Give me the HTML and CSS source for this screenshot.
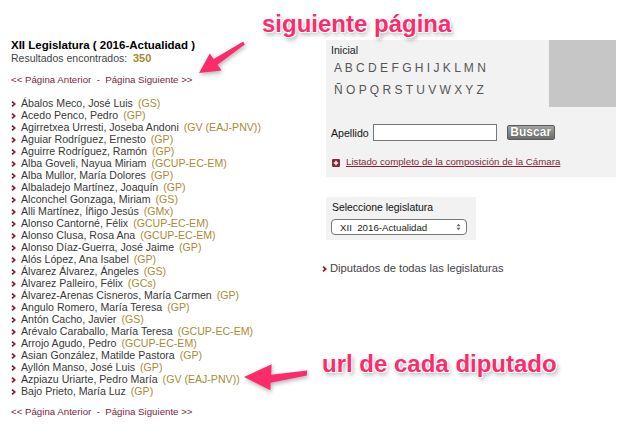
FILE: index.html
```html
<!DOCTYPE html>
<html lang="es">
<head>
<meta charset="utf-8">
<title>Diputados</title>
<link rel="stylesheet" href="styles.css">
</head>
<body>
<div class="page">
  <div class="left">
    <h1 class="title">XII Legislatura ( 2016-Actualidad )</h1>
    <div class="count">Resultados encontrados:&nbsp; <b>350</b></div>
    <div class="pager"><a>&lt;&lt; Página Anterior</a>&nbsp; -&nbsp; <a>Página Siguiente &gt;&gt;</a></div>
    <ul class="list">
      <li><svg class="chev" viewBox="0 0 5 6"><polyline points="1,0.6 3.8,3 1,5.4"/></svg><a>Ábalos Meco, José Luis</a><span class="party">(GS)</span></li>
      <li><svg class="chev" viewBox="0 0 5 6"><polyline points="1,0.6 3.8,3 1,5.4"/></svg><a>Acedo Penco, Pedro</a><span class="party">(GP)</span></li>
      <li><svg class="chev" viewBox="0 0 5 6"><polyline points="1,0.6 3.8,3 1,5.4"/></svg><a>Agirretxea Urresti, Joseba Andoni</a><span class="party">(GV (EAJ-PNV))</span></li>
      <li><svg class="chev" viewBox="0 0 5 6"><polyline points="1,0.6 3.8,3 1,5.4"/></svg><a>Aguiar Rodríguez, Ernesto</a><span class="party">(GP)</span></li>
      <li><svg class="chev" viewBox="0 0 5 6"><polyline points="1,0.6 3.8,3 1,5.4"/></svg><a>Aguirre Rodríguez, Ramón</a><span class="party">(GP)</span></li>
      <li><svg class="chev" viewBox="0 0 5 6"><polyline points="1,0.6 3.8,3 1,5.4"/></svg><a>Alba Goveli, Nayua Miriam</a><span class="party">(GCUP-EC-EM)</span></li>
      <li><svg class="chev" viewBox="0 0 5 6"><polyline points="1,0.6 3.8,3 1,5.4"/></svg><a>Alba Mullor, María Dolores</a><span class="party">(GP)</span></li>
      <li><svg class="chev" viewBox="0 0 5 6"><polyline points="1,0.6 3.8,3 1,5.4"/></svg><a>Albaladejo Martínez, Joaquín</a><span class="party">(GP)</span></li>
      <li><svg class="chev" viewBox="0 0 5 6"><polyline points="1,0.6 3.8,3 1,5.4"/></svg><a>Alconchel Gonzaga, Miriam</a><span class="party">(GS)</span></li>
      <li><svg class="chev" viewBox="0 0 5 6"><polyline points="1,0.6 3.8,3 1,5.4"/></svg><a>Alli Martínez, Íñigo Jesús</a><span class="party">(GMx)</span></li>
      <li><svg class="chev" viewBox="0 0 5 6"><polyline points="1,0.6 3.8,3 1,5.4"/></svg><a>Alonso Cantorné, Félix</a><span class="party">(GCUP-EC-EM)</span></li>
      <li><svg class="chev" viewBox="0 0 5 6"><polyline points="1,0.6 3.8,3 1,5.4"/></svg><a>Alonso Clusa, Rosa Ana</a><span class="party">(GCUP-EC-EM)</span></li>
      <li><svg class="chev" viewBox="0 0 5 6"><polyline points="1,0.6 3.8,3 1,5.4"/></svg><a>Alonso Díaz-Guerra, José Jaime</a><span class="party">(GP)</span></li>
      <li><svg class="chev" viewBox="0 0 5 6"><polyline points="1,0.6 3.8,3 1,5.4"/></svg><a>Alós López, Ana Isabel</a><span class="party">(GP)</span></li>
      <li><svg class="chev" viewBox="0 0 5 6"><polyline points="1,0.6 3.8,3 1,5.4"/></svg><a>Álvarez Álvarez, Ángeles</a><span class="party">(GS)</span></li>
      <li><svg class="chev" viewBox="0 0 5 6"><polyline points="1,0.6 3.8,3 1,5.4"/></svg><a>Álvarez Palleiro, Félix</a><span class="party">(GCs)</span></li>
      <li><svg class="chev" viewBox="0 0 5 6"><polyline points="1,0.6 3.8,3 1,5.4"/></svg><a>Álvarez-Arenas Cisneros, María Carmen</a><span class="party">(GP)</span></li>
      <li><svg class="chev" viewBox="0 0 5 6"><polyline points="1,0.6 3.8,3 1,5.4"/></svg><a>Angulo Romero, María Teresa</a><span class="party">(GP)</span></li>
      <li><svg class="chev" viewBox="0 0 5 6"><polyline points="1,0.6 3.8,3 1,5.4"/></svg><a>Antón Cacho, Javier</a><span class="party">(GS)</span></li>
      <li><svg class="chev" viewBox="0 0 5 6"><polyline points="1,0.6 3.8,3 1,5.4"/></svg><a>Arévalo Caraballo, María Teresa</a><span class="party">(GCUP-EC-EM)</span></li>
      <li><svg class="chev" viewBox="0 0 5 6"><polyline points="1,0.6 3.8,3 1,5.4"/></svg><a>Arrojo Agudo, Pedro</a><span class="party">(GCUP-EC-EM)</span></li>
      <li><svg class="chev" viewBox="0 0 5 6"><polyline points="1,0.6 3.8,3 1,5.4"/></svg><a>Asian González, Matilde Pastora</a><span class="party">(GP)</span></li>
      <li><svg class="chev" viewBox="0 0 5 6"><polyline points="1,0.6 3.8,3 1,5.4"/></svg><a>Ayllón Manso, José Luis</a><span class="party">(GP)</span></li>
      <li><svg class="chev" viewBox="0 0 5 6"><polyline points="1,0.6 3.8,3 1,5.4"/></svg><a>Azpiazu Uriarte, Pedro María</a><span class="party">(GV (EAJ-PNV))</span></li>
      <li><svg class="chev" viewBox="0 0 5 6"><polyline points="1,0.6 3.8,3 1,5.4"/></svg><a>Bajo Prieto, María Luz</a><span class="party">(GP)</span></li>
    </ul>
    <div class="pager pager-bottom"><a>&lt;&lt; Página Anterior</a>&nbsp; -&nbsp; <a>Página Siguiente &gt;&gt;</a></div>
  </div>

  <div class="right">
    <div class="search-panel">
      <div class="search-top">
        <div class="letters">
          <div class="label">Inicial</div>
          <div class="letter-row"><a>A</a> <a>B</a> <a>C</a> <a>D</a> <a>E</a> <a>F</a> <a>G</a> <a>H</a> <a>I</a> <a>J</a> <a>K</a> <a>L</a> <a>M</a> <a>N</a></div>
          <div class="letter-row"><a>Ñ</a> <a>O</a> <a>P</a> <a>Q</a> <a>R</a> <a>S</a> <a>T</a> <a>U</a> <a>V</a> <a>W</a> <a>X</a> <a>Y</a> <a>Z</a></div>
        </div>
        <div class="photo"></div>
      </div>
      <div class="apellido">
        <span class="apellido-label">Apellido</span>
        <span class="input"></span>
        <span class="button">Buscar</span>
      </div>
      <div class="listado">
        <svg class="plus" viewBox="0 0 8 8"><rect x="0" y="0" width="8" height="8" rx="1.2"/><path d="M4 1.8V6.2M1.8 4H6.2"/></svg>
        <a>Listado completo de la composición de la Cámara</a>
      </div>
    </div>

    <div class="legis-box">
      <div class="legis-label">Seleccione legislatura</div>
      <div class="select">
        <span>XII&nbsp; 2016-Actualidad</span>
        <svg class="updown" viewBox="0 0 6 9"><path d="M3 0.5L5.5 3.5H0.5Z M3 8.5L5.5 5.5H0.5Z"/></svg>
      </div>
    </div>

    <div class="all-link">
      <svg class="chev" viewBox="0 0 5 6"><polyline points="1,0.6 3.8,3 1,5.4"/></svg><a>Diputados de todas las legislaturas</a>
    </div>
  </div>
</div>

<div class="note note-next">siguiente página</div>
<div class="note note-url">url de cada diputado</div>
<svg class="arrows" viewBox="0 0 627 443" width="627" height="443">
  <polygon points="199,73 221.5,70.5 217.5,64.8 244.8,44.4 243.2,41.6 213.7,59 209.8,53.4"/>
  <polygon points="244,377 270.4,390.2 270.6,382.7 306.8,375.6 307.2,370.4 271.2,374.7 271.6,364.2"/>
</svg>
</body>
</html>
```

FILE: styles.css
```css
* {
  box-sizing: border-box;
}

html, body {
  margin: 0;
  padding: 0;
  background: #ffffff;
}

body {
  font-family: "Liberation Sans", Arial, sans-serif;
  font-size: 11px;
  color: #3a3a3a;
  width: 627px;
  height: 443px;
  overflow: hidden;
  position: relative;
}

a {
  color: inherit;
  text-decoration: none;
}

.page {
  display: flex;
  padding: 39px 0 0 11px;
}

/* ---------- left column ---------- */
.left {
  width: 315px;
  flex: none;
}

.title {
  margin: 0;
  font-size: 11.5px;
  line-height: 13px;
  font-weight: bold;
  color: #000;
}

.count {
  line-height: 12px;
  color: #444;
  font-size: 10.5px;
}

.count b {
  color: #a8852f;
  font-size: 11px;
}

.pager {
  margin-top: 10px;
  line-height: 12px;
  color: #7a1f3f;
  font-size: 9.7px;
}

.pager-bottom {
  margin-top: 9px;
}

.list {
  list-style: none;
  margin: 11px 0 0;
  padding: 0;
  font-size: 10.6px;
}

.list li {
  display: flex;
  align-items: center;
  height: 12px;
  line-height: 12px;
  white-space: nowrap;
}

.chev {
  width: 5px;
  height: 6px;
  flex: none;
  margin-right: 5px;
  margin-top: 1px;
}

.chev polyline {
  fill: none;
  stroke: #8a1d30;
  stroke-width: 1.7;
}

.list li a {
  color: #383838;
}

.party {
  color: #ab8a33;
  margin-left: 5px;
}

/* ---------- right column ---------- */
.right {
  width: 290px;
  flex: none;
  margin-top: 1px;
}

.search-panel {
  background: #f2f2f2;
  padding: 0 0 9px 0;
}

.search-top {
  display: flex;
  justify-content: space-between;
  height: 67px;
}

.letters {
  padding: 4px 0 0 5px;
}

.label {
  line-height: 12px;
  color: #222;
  margin-bottom: 1px;
  font-size: 10.6px;
}

.letter-row {
  font-size: 12px;
  line-height: 22px;
  color: #555;
  white-space: nowrap;
  padding-left: 3px;
}

.photo {
  width: 67px;
  height: 67px;
  background: #c6c6c6;
}

.apellido {
  display: flex;
  align-items: center;
  margin-top: 17px;
  padding-left: 5px;
  height: 17px;
}

.apellido-label {
  color: #111;
  margin-right: 4px;
  font-size: 10.6px;
}

.input {
  width: 124px;
  height: 17px;
  background: #fff;
  border: 1px solid #777;
}

.button {
  margin-left: 10px;
  width: 48px;
  height: 15px;
  border: 1px solid #5a5a5a;
  border-radius: 2px;
  background: linear-gradient(#a4a4a4, #6c6c6c);
  color: #fff;
  font-weight: bold;
  font-size: 12px;
  line-height: 13px;
  text-align: center;
  text-shadow: 0 0 1px #444;
}

.listado {
  display: flex;
  align-items: center;
  margin-top: 14px;
  padding-left: 6px;
  height: 13px;
}

.plus {
  width: 8px;
  height: 8px;
  margin-right: 6px;
  margin-top: 3px;
  flex: none;
}

.plus rect {
  fill: #8c2438;
}

.plus path {
  stroke: #fff;
  stroke-width: 1.4;
  fill: none;
}

.listado a {
  color: #8a1f3c;
  text-decoration: underline;
  line-height: 13px;
  font-size: 9.7px;
}

.legis-box {
  margin-top: 20px;
  width: 150px;
  height: 43px;
  background: #f2f2f2;
  padding: 5px 0 0 5px;
}

.legis-label {
  line-height: 12px;
  color: #111;
  padding-left: 1px;
  font-size: 10.4px;
}

.select {
  margin-top: 5px;
  width: 136px;
  height: 16px;
  border: 1px solid #777;
  border-radius: 4px;
  background: #fff;
  display: flex;
  align-items: center;
  justify-content: space-between;
  padding: 0 5px 0 8px;
  font-size: 9.7px;
  color: #222;
}

.updown {
  width: 5px;
  height: 8px;
}

.updown path {
  fill: #666;
}

.all-link {
  margin-top: 22px;
  margin-left: -4px;
  display: flex;
  align-items: center;
  line-height: 12px;
  color: #444;
  font-size: 11.2px;
}

.all-link .chev {
  margin-right: 3px;
}

/* ---------- annotations (overlay) ---------- */
.note {
  position: absolute;
  font-family: "Liberation Sans", Arial, sans-serif;
  font-weight: bold;
  font-size: 24px;
  line-height: 28px;
  color: #fd2b6c;
  white-space: nowrap;
  text-shadow:
    -1px -1px 0 #fff,
    1px -1px 0 #fff,
    -1px 1px 0 #fff,
    1px 1px 0 #fff,
    2px 3px 4px rgba(0, 0, 0, 0.35);
}

.note-next {
  left: 262px;
  top: 10px;
}

.note-url {
  left: 322px;
  top: 350px;
}

.arrows {
  position: absolute;
  left: 0;
  top: 0;
  pointer-events: none;
  filter: drop-shadow(1px 2px 2px rgba(0, 0, 0, 0.3));
}

.arrows polygon {
  fill: #fd2b6c;
}
```
